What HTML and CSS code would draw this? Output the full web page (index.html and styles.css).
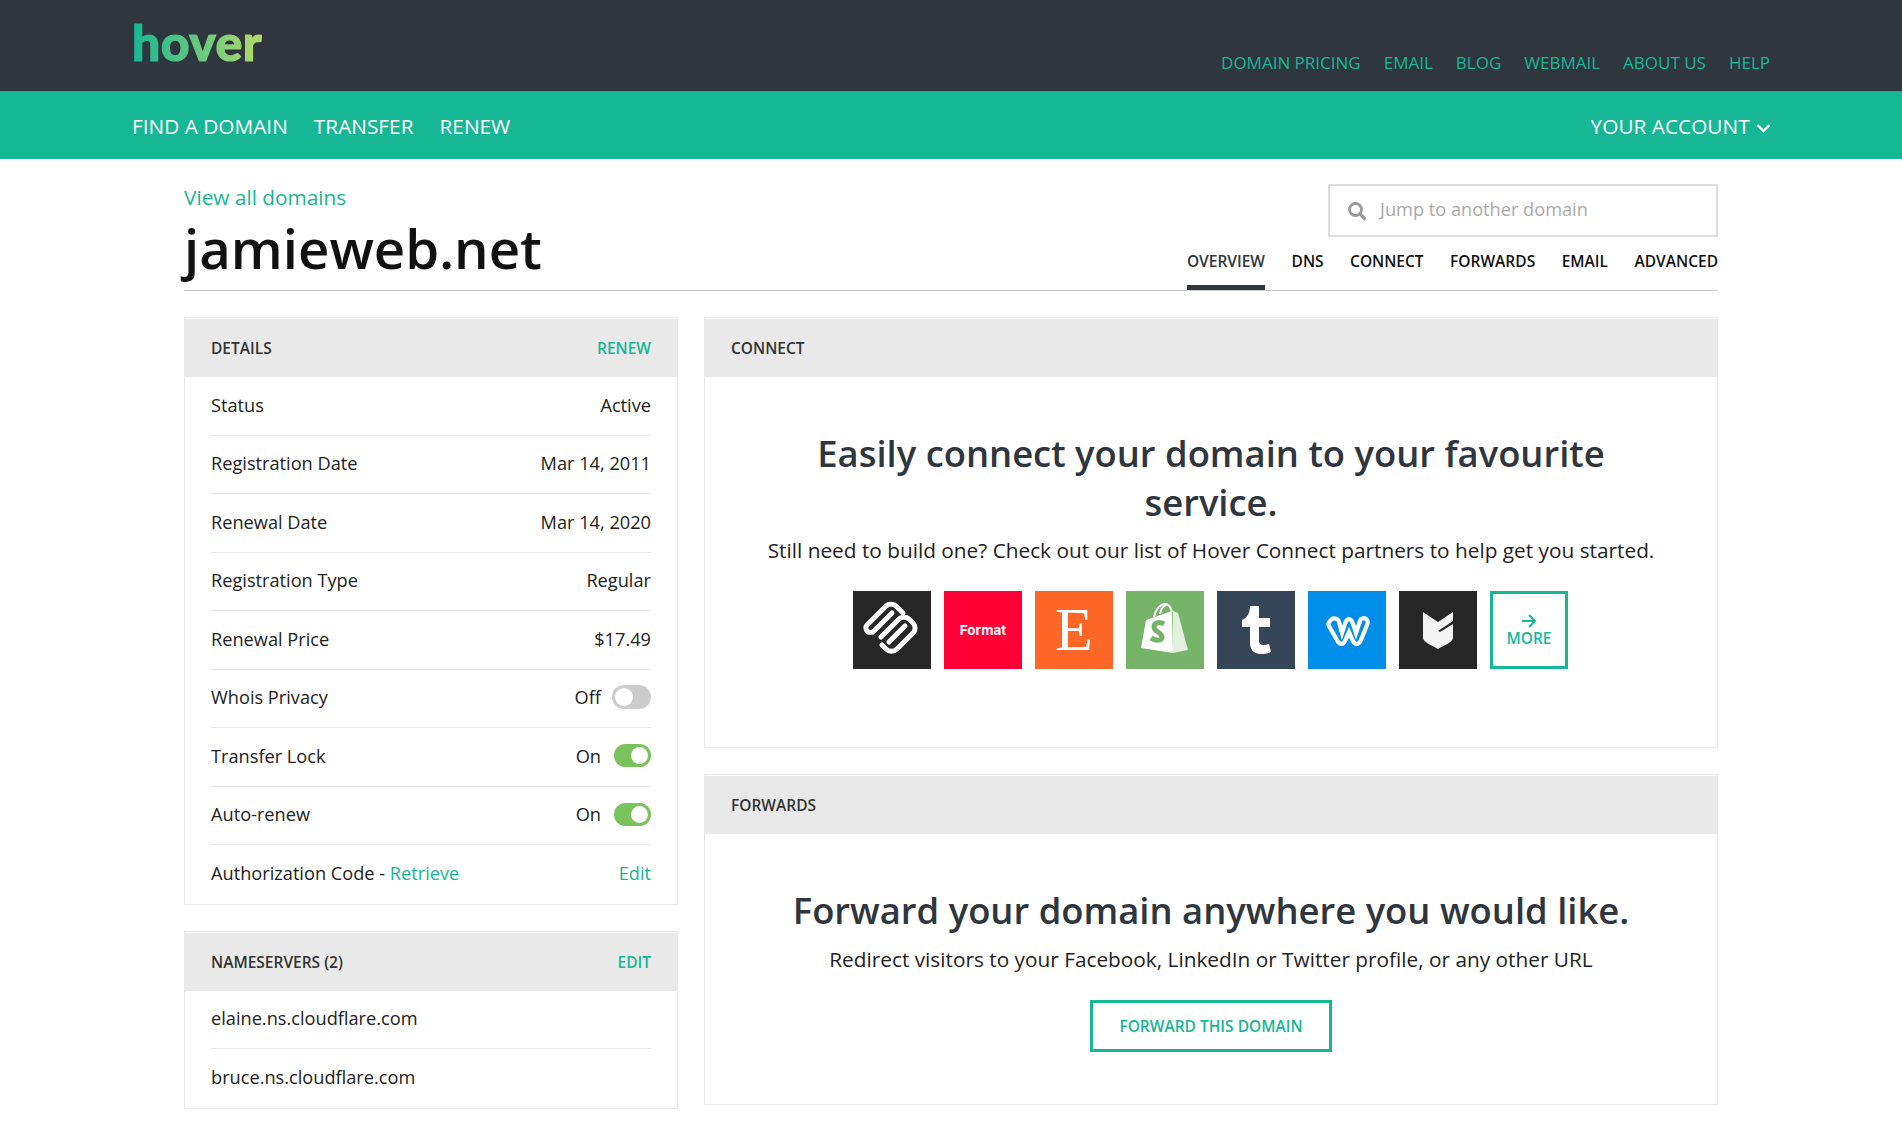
FILE: index.html
```html
<!DOCTYPE html>
<html lang="en">
<head>
    <meta charset="UTF-8">
    <title>jamieweb.net</title>
    <link rel="stylesheet" href="styles.css">
</head>
<body>
    <header class="topbar">
        <a class="logo">hover</a>
        <nav class="topnav">
            <a>Domain Pricing</a>
            <a>Email</a>
            <a>Blog</a>
            <a>Webmail</a>
            <a>About Us</a>
            <a>Help</a>
        </nav>
    </header>
    <div class="mainbar">
        <nav class="mainnav">
            <a>Find a Domain</a>
            <a>Transfer</a>
            <a>Renew</a>
        </nav>
        <a class="account">Your Account
            <svg width="15" height="10" viewBox="0 0 15 10"><path d="M1.500 1l6 6 6-6" fill="none" stroke="#fff" stroke-width="2.400"/></svg>
        </a>
    </div>

    <div class="page">
        <div class="pagehead">
            <div class="titles">
                <a class="back">View all domains</a>
                <h1>jamieweb.net</h1>
            </div>
            <div class="headright">
                <div class="search">
                    <svg width="20" height="20" viewBox="0 0 20 20"><circle cx="8.500" cy="8.500" r="6" fill="none" stroke="#999" stroke-width="2.800"/><path d="M13 13l5.500 5.500" stroke="#999" stroke-width="3.400"/></svg>
                    <span>Jump to another domain</span>
                </div>
                <nav class="tabs">
                    <a class="active">Overview</a>
                    <a>DNS</a>
                    <a>Connect</a>
                    <a>Forwards</a>
                    <a>Email</a>
                    <a>Advanced</a>
                </nav>
            </div>
        </div>

        <div class="columns">
            <div class="leftcol">
                <section class="card">
                    <div class="cardhead"><span>Details</span><a>Renew</a></div>
                    <div class="rows">
                        <div class="row"><span>Status</span><span>Active</span></div>
                        <div class="row"><span>Registration Date</span><span>Mar 14, 2011</span></div>
                        <div class="row"><span>Renewal Date</span><span>Mar 14, 2020</span></div>
                        <div class="row"><span>Registration Type</span><span>Regular</span></div>
                        <div class="row"><span>Renewal Price</span><span>$17.49</span></div>
                        <div class="row"><span>Whois Privacy</span><span class="state">Off <i class="toggle off"></i></span></div>
                        <div class="row"><span>Transfer Lock</span><span class="state">On <i class="toggle"></i></span></div>
                        <div class="row"><span>Auto-renew</span><span class="state">On <i class="toggle"></i></span></div>
                        <div class="row"><span>Authorization Code - <a>Retrieve</a></span><a>Edit</a></div>
                    </div>
                </section>
                <section class="card">
                    <div class="cardhead"><span>Nameservers (2)</span><a>Edit</a></div>
                    <div class="rows">
                        <div class="row"><span>elaine.ns.cloudflare.com</span></div>
                        <div class="row"><span>bruce.ns.cloudflare.com</span></div>
                    </div>
                </section>
            </div>

            <div class="rightcol">
                <section class="card connect">
                    <div class="cardhead"><span>Connect</span></div>
                    <div class="promo">
                        <h2>Easily connect your domain to your favourite service.</h2>
                        <p>Still need to build one? Check out our list of Hover Connect partners to help get you started.</p>
                        <div class="partners">
                            <a class="tile squarespace">
                                <svg width="78" height="78" viewBox="0 0 78 78" fill="none" stroke="#fff" stroke-width="5" stroke-linecap="round" stroke-linejoin="round"><path d="M50 22l-6-6a7.800 7.800 0 0 0-11-1L14 34a4.600 4.600 0 0 0 7 6L39 22"/><path d="M28 46L45 29a7.800 7.800 0 0 1 11-1l4 4a7 7 0 0 1 0 10L44 58a7.800 7.800 0 0 1-11 0l-4-4"/><path d="M52 35L36 51"/></svg>
                            </a>
                            <a class="tile format">Format</a>
                            <a class="tile etsy">E</a>
                            <a class="tile shopify">
                                <svg width="78" height="78" viewBox="0 0 78 78"><path d="M20 29l26-9 1 42-32-5z" fill="#fff"/><path d="M47 20l5 2 10 37-15 3z" fill="#e4f0de"/><path d="M28 26c2-9 7-13 11-13 4 0 6 4 7 8M34 23c1-5 3-8 6-9" fill="none" stroke="#fff" stroke-width="2"/><path d="M38 33c-5-3-10-1-10 3 0 5 8 5 8 10 0 4-6 4-11 1" fill="none" stroke="#75b368" stroke-width="5"/></svg>
                            </a>
                            <a class="tile tumblr">
                                <svg width="32" height="52" viewBox="0 0 32 52"><path d="M10 2h9v12h11v9H19v14c0 4 4 5 10 3l2 8c-9 4-21 3-21-9V23H2v-7c5-2 8-7 8-14z" fill="#fff"/></svg>
                            </a>
                            <a class="tile weebly">
                                <svg class="weeblymark" width="46" height="36" viewBox="0 0 46 36"><path d="M6 9c3-4 8-3 9 1l3 11 3-9c1-4 3-5 4-5s3 1 4 5l3 9 4-12c1-3 5-4 7-1 1 1 1 3 0 5l-6 15c-2 5-6 5-8 1l-4-9-4 9c-2 4-6 4-8-1L5 14c-1-2 0-4 1-5z" fill="none" stroke="#fff" stroke-width="4.200"/></svg>
                            </a>
                            <a class="tile shield">
                                <svg width="30" height="37" viewBox="0 0 30 37"><path d="M0 0l15 10L30 0v26c0 4-10 8-15 11C10 34 0 30 0 26z" fill="#f4f4f4"/><path d="M15 19L30 9v3L17 20z" fill="#272727"/></svg>
                            </a>
                            <a class="tile more">
                                <svg width="16" height="14" viewBox="0 0 16 14" fill="none" stroke="#16b795" stroke-width="2"><path d="M1 7h13M8 1l6 6-6 6"/></svg>
                                <span>More</span>
                            </a>
                        </div>
                    </div>
                </section>
                <section class="card forwards">
                    <div class="cardhead"><span>Forwards</span></div>
                    <div class="promo">
                        <h2>Forward your domain anywhere you would like.</h2>
                        <p>Redirect visitors to your Facebook, LinkedIn or Twitter profile, or any other URL</p>
                        <a class="outline">Forward this domain</a>
                    </div>
                </section>
            </div>
        </div>
    </div>
</body>
</html>
```

FILE: styles.css
```css
*{
    margin: 0;
    padding: 0;
    box-sizing: border-box;
}
body{
    font-family: "Open Sans", sans-serif;
    color: #222;
    background: #fff;
    font-size: 18.200px;
}
a{
    color: #16b795;
}
.topbar{
    height: 91px;
    background: #2f363e;
    display: flex;
    justify-content: space-between;
    padding: 0 132px;
}
.logo{
    font-family: Lato, sans-serif;
    font-weight: 900;
    font-size: 50px;
    line-height: 50px;
    letter-spacing: 0.400px;
    -webkit-text-stroke: 1.200px transparent;
    margin-top: 17px;
    height: 50px;
    background: linear-gradient(90deg, #16b795, #b4d96a);
    -webkit-background-clip: text;
    background-clip: text;
    color: transparent;
}
.topnav{
    display: flex;
    gap: 23px;
    padding-top: 51px;
    font-size: 17px;
    line-height: 24px;
    text-transform: uppercase;
}
.mainbar{
    height: 68px;
    background: #16b795;
    display: flex;
    justify-content: space-between;
    align-items: center;
    padding: 2px 131px 0 132px;
    font-size: 20.800px;
    text-transform: uppercase;
}
.mainbar a{
    color: #fff;
}
.mainnav{
    display: flex;
    gap: 26px;
}
.account svg{
    margin-left: 1px;
}
.page{
    width: 1534px;
    margin-left: 184px;
}
.pagehead{
    height: 132px;
    border-bottom: 1px solid #ccc;
    display: flex;
    justify-content: space-between;
}
.back{
    display: block;
    font-size: 20.800px;
    line-height: 27px;
    margin-top: 25px;
}
h1{
    font-size: 54.500px;
    line-height: 76px;
    font-weight: 600;
    color: #111;
    margin-top: -1px;
}
.headright{
    display: flex;
    flex-direction: column;
    align-items: flex-end;
    padding-top: 25px;
}
.search{
    width: 390px;
    height: 53px;
    border: 2px solid #ddd;
    display: flex;
    align-items: center;
    gap: 13px;
    padding: 0 0 3px 17px;
    color: #aaa;
    font-size: 18.200px;
}
.search svg{
    margin-top: 3px;
}
.tabs{
    display: flex;
    gap: 26.500px;
    margin-top: 13px;
    font-size: 15.500px;
    font-weight: 600;
    text-transform: uppercase;
}
.tabs a{
    color: #111;
    height: 40px;
    line-height: 22px;
}
.tabs a.active{
    color: #2f363e;
    border-bottom: 5px solid #2f363e;
}
.columns{
    display: flex;
    gap: 26px;
    margin-top: 26px;
}
.leftcol{
    width: 494px;
    display: flex;
    flex-direction: column;
    gap: 26px;
}
.rightcol{
    flex: 1;
    display: flex;
    flex-direction: column;
    gap: 26px;
}
.card{
    border: 1px solid #e8e8e8;
    padding-top: 1px;
}
.cardhead{
    height: 58px;
    background: #e9e9e9;
    display: flex;
    justify-content: space-between;
    align-items: center;
    padding: 0 26px;
    font-size: 15.500px;
    font-weight: 600;
    text-transform: uppercase;
    color: #333;
}
.rows{
    padding: 0 26px;
}
.row{
    height: 58.500px;
    display: flex;
    justify-content: space-between;
    align-items: center;
    padding-bottom: 2px;
    border-bottom: 1px solid #e8e8e8;
}
.row:last-child{
    border-bottom: 0;
}
.state{
    display: flex;
    align-items: center;
    gap: 13px;
}
.toggle{
    display: block;
    width: 37px;
    height: 23px;
    border-radius: 12px;
    background: #7ac35c;
    position: relative;
}
.toggle::after{
    content: "";
    position: absolute;
    right: 3px;
    top: 3px;
    width: 17px;
    height: 17px;
    border-radius: 50%;
    background: #fff;
}
.toggle.off{
    width: 39px;
    height: 24px;
    margin-left: -2px;
    background: #ccc;
}
.toggle.off::after{
    right: auto;
    left: 3px;
    width: 18px;
    height: 18px;
}
.promo{
    text-align: center;
    padding: 52px 60px 0;
}
.connect{
    height: 431px;
}
.forwards{
    height: 331px;
}
h2{
    font-size: 36.400px;
    line-height: 48.500px;
    font-weight: 600;
    color: #2f363e;
}
.promo p{
    font-size: 20.800px;
    line-height: 28px;
    margin-top: 10px;
}
.partners{
    display: flex;
    justify-content: center;
    gap: 13px;
    margin-top: 27px;
    padding-right: 1px;
}
.tile{
    width: 78px;
    height: 78px;
    display: flex;
    align-items: center;
    justify-content: center;
}
.squarespace, .shield{
    background: #272727;
}
.format{
    background: #ff0037;
    color: #fff;
    font-family: Inter, sans-serif;
    font-size: 13.500px;
    font-weight: 700;
}
.etsy{
    background: #ff6726;
    color: #fff;
    font-family: "Liberation Serif", serif;
    font-size: 62px;
    padding-bottom: 2px;
}
.shopify{
    background: #75b368;
}
.tumblr{
    background: #374559;
}
.weebly{
    background: #008ee8;
}
.weeblymark{
    margin: 0 1px 1px 0;
}
.more{
    border: 3px solid #16b795;
    flex-direction: column;
    font-size: 15.500px;
    font-weight: 600;
    text-transform: uppercase;
    line-height: 20px;
}
.more svg{
    margin-top: 2px;
}
.outline{
    display: inline-block;
    margin-top: 27px;
    width: 242px;
    height: 52px;
    line-height: 46px;
    border: 3px solid #16b795;
    font-size: 15.500px;
    font-weight: 600;
    text-transform: uppercase;
}
```
